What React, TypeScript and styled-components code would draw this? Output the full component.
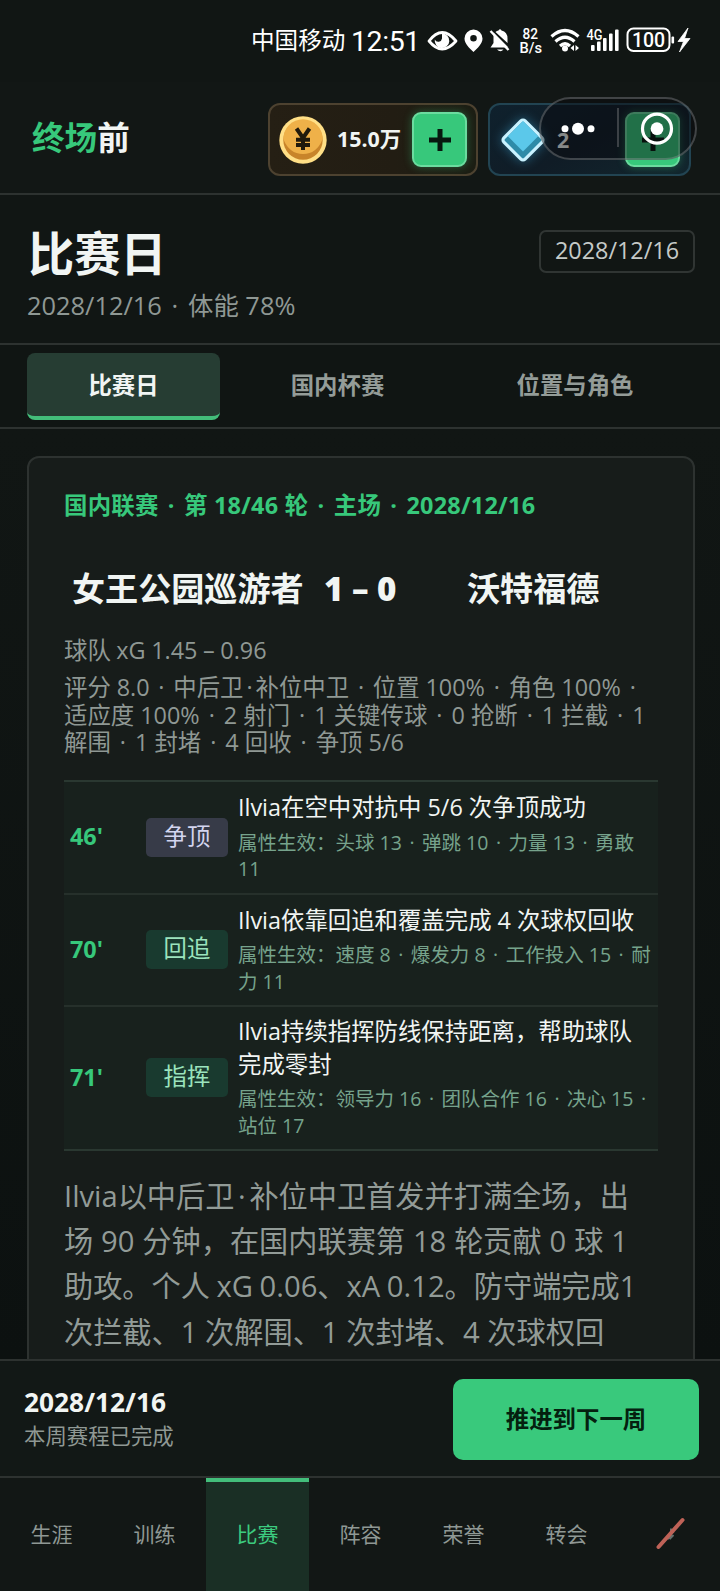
import React from "react";
import styled, { createGlobalStyle, css } from "styled-components";

const GlobalStyle = createGlobalStyle`
  * { box-sizing: border-box; }
  body { margin: 0; background: #101513; }
`;

const line = "#2d3230";
const green = "#37c87b";
const muted = "#8f9894";

const Screen = styled.div`
  width: 720px;
  height: 1591px;
  display: flex;
  flex-direction: column;
  overflow: hidden;
  background: #111614;
  color: #f1f5f3;
  font-family: "Open Sans", "Noto Sans CJK SC", sans-serif;
  white-space: nowrap;
`;

const StatusBar = styled.div`
  height: 82px;
  flex: none;
  display: flex;
  align-items: center;
  padding-left: 251px;
  color: #fff;
`;
const Carrier = styled.span`
  width: 100px;
  margin-top: -4px;
  font-size: 23.6px;
  font-weight: 400;
`;
const Clock = styled.span`
  width: 74px;
  font-family: Roboto, sans-serif;
  font-size: 28.5px;
  letter-spacing: -0.4px;
  font-weight: 400;
`;
const StatusIcons = styled.svg`
  display: block;
  flex: none;
`;

const Header = styled.header`
  position: relative;
  height: 113px;
  flex: none;
  display: flex;
  align-items: flex-start;
  justify-content: space-between;
  padding: 21px 29px 0 32px;
  border-bottom: 2px solid ${line};
  background: #121715;
`;
const Brand = styled.div`
  height: 73px;
  line-height: 69px;
  font-size: 32.6px;
  font-weight: 700;
`;
const BrandAccent = styled.span`
  color: ${green};
`;
const Wallet = styled.div`
  display: flex;
  gap: 10px;
`;
const Chip = styled.div<{ $kind: "cash" | "gem" }>`
  width: ${(p) => (p.$kind === "cash" ? 210 : 203)}px;
  height: 73px;
  display: flex;
  align-items: center;
  padding: 0 9px 0 9px;
  border-radius: 12px;
  ${(p) =>
    p.$kind === "cash"
      ? css`
          border: 2px solid #4d4230;
          background: linear-gradient(90deg, #251f14, #221d13 60%, #1c1e14);
        `
      : css`
          border: 2px solid #224452;
          background: linear-gradient(150deg, #0f212d, #101c26 50%, #12262e);
        `}
`;
const CoinIcon = styled.svg`
  flex: none;
`;
const Amount = styled.span<{ $dim?: boolean }>`
  flex: 1;
  padding-left: 10px;
  padding-bottom: ${(p) => (p.$dim ? 0 : 2)}px;
  line-height: 28px;
  font-size: 21.4px;
  font-weight: 700;
`;
const AddButton = styled.button`
  width: 55px;
  height: 55px;
  flex: none;
  padding: 0;
  display: grid;
  place-items: center;
  border: 2px solid #6bdc9f;
  border-radius: 9px;
  background: ${green};
  box-shadow: 0 0 9px rgba(55, 200, 123, 0.4);
`;
const Capsule = styled.div`
  position: absolute;
  left: 539px;
  top: 15px;
  width: 158px;
  height: 63px;
  border: 2px solid rgba(150, 155, 158, 0.38);
  border-radius: 32px;
  background: rgba(8, 8, 14, 0.46);
`;

const PageHead = styled.section`
  height: 150px;
  flex: none;
  display: flex;
  justify-content: space-between;
  padding: 31px 25px 0 27px;
  border-bottom: 2px solid ${line};
`;
const Title = styled.h1`
  margin: 0 0 0 1px;
  height: 58px;
  line-height: 56px;
  font-size: 46.2px;
  font-weight: 700;
`;
const Subtitle = styled.div`
  line-height: 40px;
  margin-top: 1px;
  font-size: 25.4px;
  color: ${muted};
`;
const DateBadge = styled.div`
  width: 156px;
  height: 43px;
  margin-top: 4px;
  line-height: 37px;
  text-align: center;
  border: 2px solid #303533;
  border-radius: 7px;
  font-size: 23.4px;
  color: #c5cac8;
`;

const Tabs = styled.nav`
  height: 84px;
  flex: none;
  display: flex;
  gap: 45px;
  padding: 8px 0 0 27px;
  border-bottom: 2px solid ${line};
  background: #101513;
`;
const Tab = styled.div<{ $active?: boolean; $w: number }>`
  width: ${(p) => p.$w}px;
  height: 67px;
  line-height: 64px;
  text-align: center;
  font-size: 23.4px;
  font-weight: 700;
  color: ${(p) => (p.$active ? "#f1f5f3" : "#949c98")};
  ${(p) =>
    p.$active &&
    css`
      border-radius: 8px;
      border-bottom: 4px solid #43bd7a;
      background: #263d33;
    `}
`;

const Content = styled.main`
  flex: 1;
  min-height: 0;
  overflow: hidden;
  padding: 27px 25px 0 27px;
  background: linear-gradient(180deg, #111614, #0c1110);
`;
const Card = styled.article`
  height: 1000px;
  padding: 32px 35px;
  border: 2px solid ${line};
  border-radius: 12px;
  background: #171c1a;
`;
const Eyebrow = styled.div`
  height: 30px;
  line-height: 30px;
  font-size: 23.4px;
  letter-spacing: 0.25px;
  font-weight: 700;
  color: ${green};
`;
const ScoreLine = styled.div`
  display: flex;
  height: 44px;
  line-height: 44px;
  margin-top: 47px;
  padding-left: 8px;
  font-size: 33.1px;
  font-weight: 700;
`;
const Team = styled.span<{ $w: number }>`
  width: ${(p) => p.$w}px;
`;
const Score = styled.span`
  width: 143px;
  font-weight: 800;
`;
const Stats = styled.div`
  margin-top: 24px;
  font-size: 23.4px;
  color: ${muted};
`;
const Line = styled.div<{ $h: number; $ws?: number; $gap?: number }>`
  height: ${(p) => p.$h}px;
  line-height: ${(p) => p.$h}px;
  word-spacing: ${(p) => p.$ws ?? 0}px;
  margin-bottom: ${(p) => p.$gap ?? 0}px;
`;
const Dot = styled.span`
  padding: 0 0.125em;
`;

const Events = styled.div`
  margin-top: 23px;
  border-top: 2px solid #2a3831;
  background: #18211d;
`;
const EventRow = styled.div<{ $h: number; $last?: boolean }>`
  display: flex;
  align-items: center;
  height: ${(p) => p.$h}px;
  border-bottom: 2px solid ${(p) => (p.$last ? "#2a3831" : "#26302b")};
`;
const Minute = styled.div`
  width: 82px;
  padding-left: 6px;
  padding-bottom: 2px;
  font-size: 23.4px;
  font-weight: 700;
  color: ${green};
`;
const Tag = styled.div<{ $tone: "duel" | "team" }>`
  width: 82px;
  height: 39px;
  line-height: 36px;
  margin-right: 10px;
  text-align: center;
  border-radius: 5px;
  font-size: 23.4px;
  color: ${(p) => (p.$tone === "duel" ? "#d3d5ef" : "#9be3bd")};
  background: ${(p) => (p.$tone === "duel" ? "#373b48" : "#193a2f")};
`;
const EventText = styled.div`
  padding-bottom: 1px;
  font-size: 23.4px;
`;
const Attributes = styled.div`
  margin-top: 6px;
  font-size: 19.5px;
  color: #76a38c;
`;
const Report = styled.div`
  margin-top: 23px;
  font-size: 29.2px;
  color: #929b97;
`;

const ActionBar = styled.div`
  height: 117px;
  flex: none;
  display: flex;
  justify-content: space-between;
  padding: 18px 21px 0 24px;
  border-top: 2px solid ${line};
  background: #121816;
`;
const WeekDate = styled.div`
  margin-top: 6px;
  height: 36px;
  line-height: 34px;
  font-size: 26.3px;
  font-weight: 700;
`;
const WeekNote = styled.div`
  height: 32px;
  line-height: 30px;
  font-size: 21.4px;
  color: ${muted};
`;
const AdvanceButton = styled.button`
  width: 246px;
  height: 81px;
  padding: 0 0 3px;
  border: 0;
  border-radius: 10px;
  background: #39c97c;
  color: #04200f;
  font-family: inherit;
  font-size: 23.4px;
  font-weight: 700;
`;
const BottomNav = styled.nav`
  height: 115px;
  flex: none;
  display: grid;
  grid-template-columns: repeat(7, 103px);
  border-top: 2px solid ${line};
  background: #121715;
`;
const NavItem = styled.div<{ $active?: boolean }>`
  display: flex;
  align-items: center;
  justify-content: center;
  padding-bottom: 4px;
  font-size: 21px;
  color: ${(p) => (p.$active ? "#3ccb7f" : "#8f9894")};
  ${(p) =>
    p.$active &&
    css`
      background: #1a2f25;
      box-shadow: inset 0 4px 0 #43be7b;
    `}
`;

function Dotted({ children }: { children: string }) {
  const parts = children.split("·");
  return (
    <>
      {parts.map((part, i) => (
        <React.Fragment key={i}>
          {i > 0 && <Dot>·</Dot>}
          {part}
        </React.Fragment>
      ))}
    </>
  );
}

function StatusGlyphs() {
  return (
    <StatusIcons width="270" height="40" viewBox="425 21 270 40" fill="#fff">
      <path d="M429 41 Q442 24 456 41 Q442 57 429 41Z" fill="none" stroke="#fff" strokeWidth="2.8" strokeLinejoin="round" />
      <path d="M442 33.5a7.3 7.3 0 1 1-7.2 6.1 3.8 3.8 0 0 0 7.2-1.2z" />
      <path fillRule="evenodd" d="M473.5 29.5a9 9 0 0 1 9 9c0 5.400-5 9.500-9 13.500-4-4-9-8.100-9-13.500a9 9 0 0 1 9-9zm0 5.500a3.300 3.300 0 1 0 0 6.600 3.300 3.300 0 0 0 0-6.600z" />
      <path d="M493.500 32.500 508.500 47.500H490.500l3-4.500z" />
      <path d="M495.500 32a7 7 0 0 1 3-1.500q1.500-2.500 3 0 6 1.500 6 8v4.500z" />
      <path d="M490.500 31 508.500 50" stroke="#fff" strokeWidth="2.400" />
      <path d="M497 49.500h6.500q-3 3.500-6.500 0z" />
      <text x="522.500" y="39" fontSize="15" fontWeight="500" fontFamily="Roboto" textLength="15.500" lengthAdjust="spacingAndGlyphs">82</text>
      <text x="519.500" y="52.500" fontSize="15" fontWeight="500" fontFamily="Roboto" textLength="22.500" lengthAdjust="spacingAndGlyphs">B/s</text>
      <g fill="none" stroke="#fff" strokeWidth="3.200">
        <path d="M551.500 36.500q13.500-12 27 0" />
        <path d="M555.500 41.500q9.500-8.500 19 0" />
        <path d="M560 46q5-4.500 10 0" />
      </g>
      <circle cx="565" cy="48.500" r="3" />
      <path d="M574 45v6l-3.500-3zM575.500 45v6l3.500-3z" />
      <text x="586.500" y="39.500" fontSize="14" fontWeight="500" fontFamily="Roboto" textLength="16" lengthAdjust="spacingAndGlyphs">4G</text>
      <rect x="591" y="45" width="3.600" height="6" rx="1" />
      <rect x="597" y="41.500" width="3.600" height="9.500" rx="1" />
      <rect x="603" y="38" width="3.600" height="13" rx="1" />
      <rect x="609" y="33.500" width="3.600" height="17.500" rx="1" />
      <rect x="615" y="29.500" width="3.600" height="21.500" rx="1" />
      <rect x="627.500" y="28.500" width="42" height="22.500" rx="6" fill="none" stroke="#fff" strokeWidth="2" />
      <rect x="671.500" y="36.500" width="2.600" height="7" rx="1" />
      <text x="648.500" y="46.700" textAnchor="middle" fontSize="19.500" fontWeight="500" fontFamily="Roboto">100</text>
      <path d="M688 28 678 41.500h5.500l-4 10.500L690 38.500h-5.500z" stroke="#fff" strokeWidth="0.800" />
    </StatusIcons>
  );
}

function Coin() {
  return (
    <CoinIcon width="48" height="48" viewBox="0 0 48 48">
      <circle cx="24" cy="24" r="23.700" fill="#ffdf86" />
      <circle cx="24" cy="24" r="19.700" fill="#c8842a" />
      <path d="M4.300 23a19.700 19.700 0 0 1 39.400 0q-6 15-19.700 15T4.300 23z" fill="#efb149" />
      <path d="M17.500 12.500l6.500 9.500 6.500-9.500M24 21.500v12.500M17 23.800h14M17 29h14" fill="none" stroke="#211a0c" strokeWidth="4" />
    </CoinIcon>
  );
}

const GemIcon = styled.svg`
  flex: none;
  filter: drop-shadow(0 0 6px rgba(60, 180, 230, 0.45));
`;

function Gem() {
  return (
    <GemIcon width="48" height="52" viewBox="0 0 48 52">
      <g transform="translate(24 26) rotate(45)">
        <rect x="-15" y="-15" width="30" height="30" rx="3" fill="#2e8ba8" stroke="#c9f2ff" strokeWidth="3.200" />
        <rect x="-13.400" y="-13.400" width="21.500" height="21.500" fill="#5bc8ea" />
      </g>
    </GemIcon>
  );
}

function Plus() {
  return (
    <svg width="22" height="22" viewBox="0 0 22 22">
      <path d="M11 0v22M0 11h22" stroke="#07170e" strokeWidth="5" />
    </svg>
  );
}

const events = [
  {
    minute: "46'", tag: "争顶", tone: "duel" as const, h: 113,
    text: ["Ilvia在空中对抗中 5/6 次争顶成功"],
    attrs: ["属性生效：头球 13 · 弹跳 10 · 力量 13 · 勇敢", "11"],
  },
  {
    minute: "70'", tag: "回追", tone: "team" as const, h: 112,
    text: ["Ilvia依靠回追和覆盖完成 4 次球权回收"],
    attrs: ["属性生效：速度 8 · 爆发力 8 · 工作投入 15 · 耐", "力 11"],
  },
  {
    minute: "71'", tag: "指挥", tone: "team" as const, h: 144,
    text: ["Ilvia持续指挥防线保持距离，帮助球队", "完成零封"],
    attrs: ["属性生效：领导力 16 · 团队合作 16 · 决心 15 ·", "站位 17"],
  },
];

const report = [
  { text: "Ilvia以中后卫·补位中卫首发并打满全场，出", ws: 0 },
  { text: "场 90 分钟，在国内联赛第 18 轮贡献 0 球 1", ws: 0.3 },
  { text: "助攻。个人 xG 0.06、xA 0.12。防守端完成1", ws: -1 },
  { text: "次拦截、1 次解围、1 次封堵、4 次球权回", ws: 0.1 },
];

const navItems = ["生涯", "训练", "比赛", "阵容", "荣誉", "转会"];

export default function App() {
  return (
    <Screen>
      <GlobalStyle />
      <StatusBar>
        <Carrier>中国移动</Carrier>
        <Clock>12:51</Clock>
        <StatusGlyphs />
      </StatusBar>
      <Header>
        <Brand><BrandAccent>终场</BrandAccent>前</Brand>
        <Wallet>
          <Chip $kind="cash">
            <Coin />
            <Amount>15.0万</Amount>
            <AddButton><Plus /></AddButton>
          </Chip>
          <Chip $kind="gem">
            <Gem />
            <Amount $dim>2</Amount>
            <AddButton><Plus /></AddButton>
          </Chip>
        </Wallet>
        <Capsule>
          <svg width="154" height="59" viewBox="541 99 154 59" fill="#fff">
            <circle cx="565" cy="128.700" r="3.500" />
            <circle cx="578" cy="128.700" r="6" />
            <circle cx="591" cy="128.700" r="3.500" />
            <path d="M618 108v39" stroke="#3c4146" strokeWidth="2" />
            <circle cx="657" cy="128.700" r="14.500" fill="none" stroke="#fff" strokeWidth="3.200" />
            <circle cx="657" cy="128.700" r="6.400" />
          </svg>
        </Capsule>
      </Header>
      <PageHead>
        <div>
          <Title>比赛日</Title>
          <Subtitle><Dotted>2028/12/16 · 体能 78%</Dotted></Subtitle>
        </div>
        <DateBadge>2028/12/16</DateBadge>
      </PageHead>
      <Tabs>
        <Tab $active $w={193}>比赛日</Tab>
        <Tab $w={145}>国内杯赛</Tab>
        <Tab $w={240}>位置与角色</Tab>
      </Tabs>
      <Content>
        <Card>
          <Eyebrow><Dotted>国内联赛 · 第 18/46 轮 · 主场 · 2028/12/16</Dotted></Eyebrow>
          <ScoreLine>
            <Team $w={252}>女王公园巡游者</Team>
            <Score>1 – 0</Score>
            <Team $w={132}>沃特福德</Team>
          </ScoreLine>
          <Stats>
            <Line $h={30} $gap={9} $ws={-0.5}>球队 xG 1.45 – 0.96</Line>
            <Line $h={27.6} $ws={-0.2}><Dotted>评分 8.0 · 中后卫·补位中卫 · 位置 100% · 角色 100% ·</Dotted></Line>
            <Line $h={27.6}><Dotted>适应度 100% · 2 射门 · 1 关键传球 · 0 抢断 · 1 拦截 · 1</Dotted></Line>
            <Line $h={27.6}><Dotted>解围 · 1 封堵 · 4 回收 · 争顶 5/6</Dotted></Line>
          </Stats>
          <Events>
            {events.map((e, i) => (
              <EventRow key={e.minute} $h={e.h} $last={i === events.length - 1}>
                <Minute>{e.minute}</Minute>
                <Tag $tone={e.tone}>{e.tag}</Tag>
                <EventText>
                  {e.text.map((t) => <Line key={t} $h={32.5}>{t}</Line>)}
                  <Attributes>
                    {e.attrs.map((t) => <Line key={t} $h={26.5}><Dotted>{t}</Dotted></Line>)}
                  </Attributes>
                </EventText>
              </EventRow>
            ))}
          </Events>
          <Report>
            {report.map((r) => <Line key={r.text} $h={45.3} $ws={r.ws}><Dotted>{r.text}</Dotted></Line>)}
          </Report>
        </Card>
      </Content>
      <ActionBar>
        <div>
          <WeekDate>2028/12/16</WeekDate>
          <WeekNote>本周赛程已完成</WeekNote>
        </div>
        <AdvanceButton>推进到下一周</AdvanceButton>
      </ActionBar>
      <BottomNav>
        {navItems.map((n) => <NavItem key={n} $active={n === "比赛"}>{n}</NavItem>)}
        <NavItem>
          <svg width="32" height="34" viewBox="0 0 32 34">
            <path d="M17 12.500v9l2.500-2.500M14 23l3-2M17 13l2.500 4" stroke="#66706c" strokeWidth="2" fill="none" />
            <path d="M4.500 31 28.500 4" stroke="#be6257" strokeWidth="4" strokeLinecap="round" />
          </svg>
        </NavItem>
      </BottomNav>
    </Screen>
  );
}
